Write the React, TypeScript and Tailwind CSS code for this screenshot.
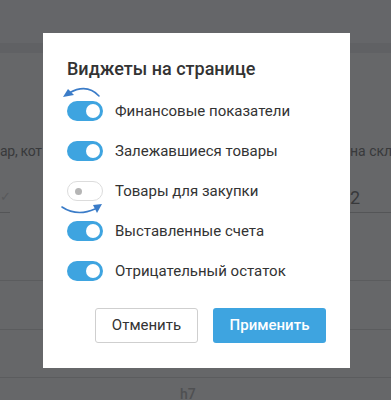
import React, { useState } from 'react';

const widgets = [
  { id: 'fin', label: 'Финансовые показатели', on: true },
  { id: 'stale', label: 'Залежавшиеся товары', on: true },
  { id: 'buy', label: 'Товары для закупки', on: false },
  { id: 'bills', label: 'Выставленные счета', on: true },
  { id: 'neg', label: 'Отрицательный остаток', on: true },
];

function Toggle({ on, onClick }: { on: boolean; onClick: () => void }) {
  if (on) {
    return (
      <button type="button" onClick={onClick} className="w-[36px] h-[20px] rounded-full bg-[#3ea4e0] flex items-center justify-end pr-[3px] shrink-0">
        <span className="w-[14px] h-[14px] rounded-full bg-white" />
      </button>
    );
  }
  return (
    <button type="button" onClick={onClick} className="w-[36px] h-[20px] rounded-full bg-white border border-[#dcdcdc] flex items-center pl-[7px] shrink-0">
      <span className="w-[7px] h-[7px] rounded-full bg-[#b5b5b5]" />
    </button>
  );
}

export default function App() {
  const [state, setState] = useState(widgets);
  const flip = (id: string) => setState(s => s.map(w => (w.id === id ? { ...w, on: !w.on } : w)));

  return (
    <div className="relative w-[391px] h-[400px] overflow-hidden bg-[#666769] text-[15px]" style={{ fontFamily: 'Roboto, "Noto Sans", sans-serif' }}>
      {/* page behind the overlay */}
      <div className="h-[43px] bg-[#656669]" />
      <div className="h-[10px] bg-[#606164]" />
      <div className="h-[88px]" />
      <div className="flex h-[20px] items-center text-[#38393b] whitespace-nowrap text-[14px]">
        <span className="w-[43px] overflow-hidden tracking-[-0.3px]">ар, кот</span>
        <span className="ml-[307px] w-[41px] overflow-hidden">на скла</span>
      </div>
      <div className="h-[24px]" />
      <div className="flex h-[24px] items-center text-[#38393b]">
        <span className="w-[43px] text-[#58595b] text-[13px]">✓</span>
        <span className="ml-[307px] text-[18px]">2</span>
      </div>
      <div className="h-[3px]" />
      <div className="flex">
        <div className="w-[10px] h-px bg-[#545557]" />
        <div className="ml-[340px] w-[41px] h-px bg-[#545557]" />
      </div>
      <div className="h-[67px]" />
      <div className="h-px bg-[#5b5c5e]" />
      <div className="h-[48px]" />
      <div className="h-px bg-[#5b5c5e]" />
      <div className="h-[47px]" />
      <div className="h-px bg-[#5b5c5e]" />
      <div className="pl-[180px] pt-[8px] text-[#4f5052] text-[14px] leading-[16px] font-medium">h7</div>

      {/* modal */}
      <div className="absolute left-[43px] top-[33px] w-[307px] h-[335px] bg-white pl-[24px] pr-[24px] pt-[22px] flex flex-col">
        <h2 className="text-[18px] leading-[28px] font-medium text-[#333333]">Виджеты на странице</h2>
        <div className="mt-[8px] flex flex-col">
          {state.map(w => (
            <div key={w.id} className="h-[40px] flex items-center gap-[12px]">
              <Toggle on={w.on} onClick={() => flip(w.id)} />
              <span className="text-[15px] text-[#333333]">{w.label}</span>
            </div>
          ))}
        </div>
        <div className="mt-[17px] flex justify-end gap-[15px]">
          <button type="button" className="w-[103px] h-[35px] rounded-[3px] border border-[#cfcfcf] bg-white text-[15px] text-[#333333]">Отменить</button>
          <button type="button" className="w-[113px] h-[35px] rounded-[3px] bg-[#3ea4e0] text-[15px] font-medium text-white">Применить</button>
        </div>

        <svg className="absolute inset-0 pointer-events-none" width="307" height="335" viewBox="0 0 307 335">
          <path d="M56 63 Q44 50 26 60" fill="none" stroke="#3b7cc8" strokeWidth="1.6" strokeLinecap="round" />
          <polygon points="20,64 25,56 31,62" fill="#3b7cc8" />
          <path d="M19 174 Q34 184 52 176" fill="none" stroke="#3b7cc8" strokeWidth="1.6" strokeLinecap="round" />
          <polygon points="59,171 50,172 54,180" fill="#3b7cc8" />
        </svg>
      </div>
    </div>
  );
}
